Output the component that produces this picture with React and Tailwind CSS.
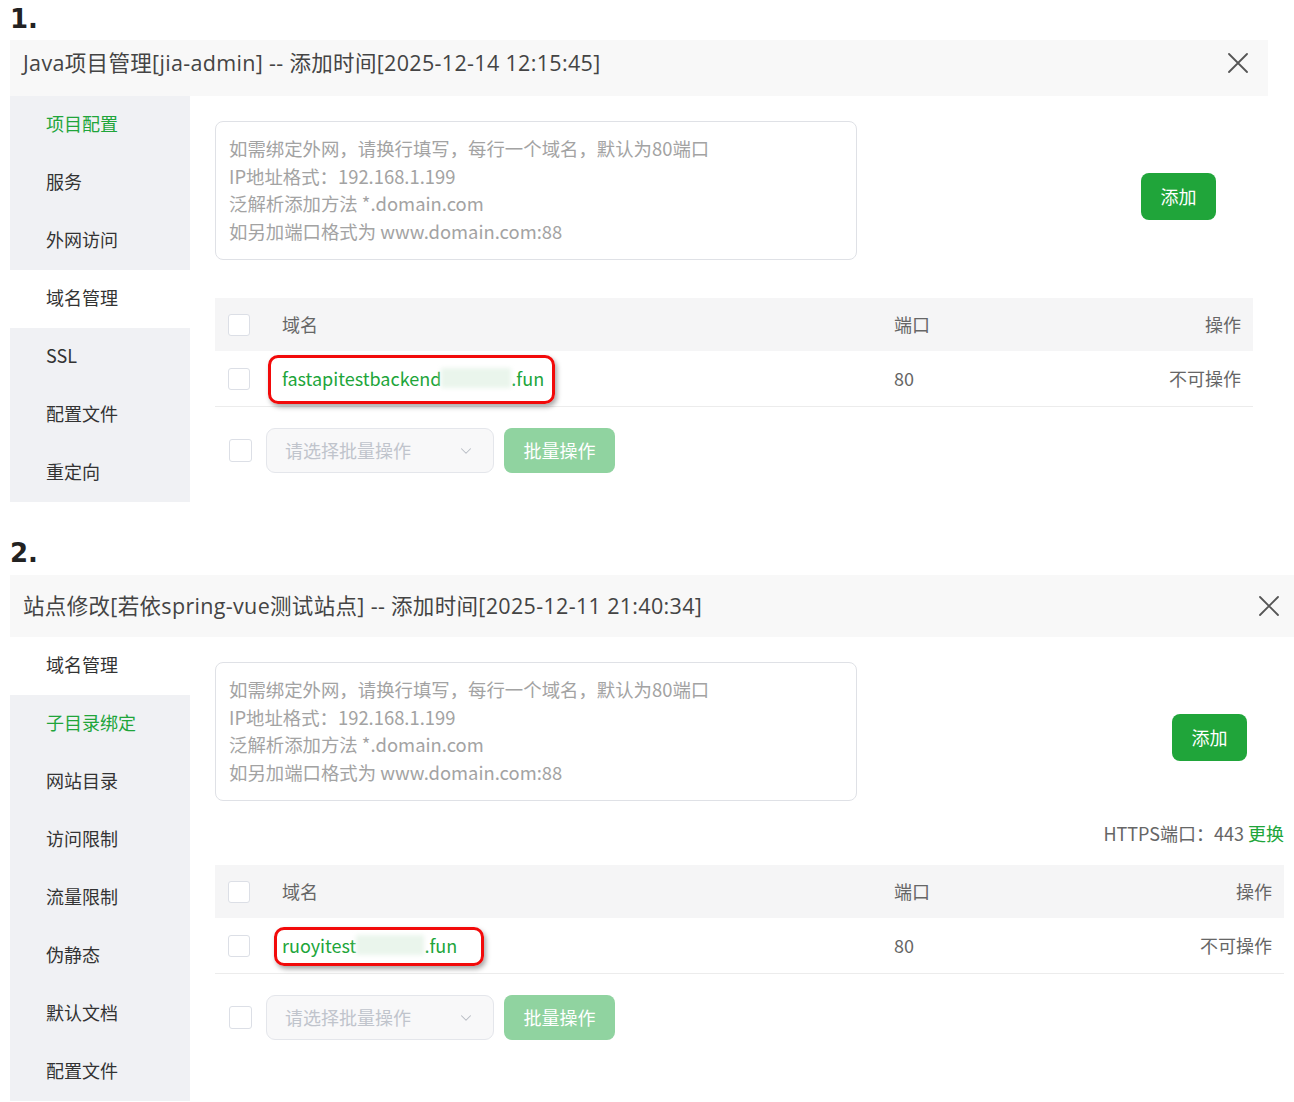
import React from 'react';
import { ChevronDown } from 'lucide-react';

const GREEN = 'text-[#20a53a]';

const CloseIcon = () => (
    <svg width="20" height="20" viewBox="0 0 20 20" fill="none">
        <path d="M1 1L19 19M19 1L1 19" stroke="#555" strokeWidth="1.8" strokeLinecap="round" />
    </svg>
);

const Checkbox = ({ className = '' }) => (
    <span className={`block w-[22px] h-[22px] bg-white border border-[#dcdfe6] rounded-[3px] ${className}`} />
);

const placeholderLines = [
    '如需绑定外网，请换行填写，每行一个域名，默认为80端口',
    'IP地址格式：192.168.1.199',
    '泛解析添加方法 *.domain.com',
    '如另加端口格式为 www.domain.com:88',
];

const DomainName = ({ prefix, blurW, box }) => (
    <span className={`relative inline-flex items-center leading-[24px] ${box.shift}`}>
        <span className={GREEN}>{prefix}</span>
        <span className={`inline-block h-[20px] ${blurW} bg-[#eaf5ec] blur-[2px]`} />
        <span className={GREEN}>.fun</span>
        <span
            className={`absolute ${box.pos} border-[3px] border-[#f20a0a] rounded-[10px] shadow-[2px_3px_5px_rgba(0,0,0,0.35)]`}
        />
    </span>
);

const Section = ({ label, labelBox, title, width, headerBox, closePr, contentPr, menu, whiteIdx, greenIdx, https, domain }) => (
    <div className={width}>
        <div className={`flex items-center ${labelBox} text-[26px] font-bold text-[#222] font-['DejaVu_Sans',sans-serif]`}>
            {label}
        </div>

        {/* 标题栏 */}
        <div className={`flex items-center justify-between bg-[#f8f8f8] pl-[13px] ${closePr} ${headerBox}`}>
            <span className="text-[21.5px] tracking-[0.33px] text-[#444] font-['Open_Sans','Noto_Sans_CJK_SC',sans-serif]">{title}</span>
            <CloseIcon />
        </div>

        <div className="flex">
            {/* 左侧菜单 */}
            <div className="w-[180px] shrink-0 bg-[#f0f1f4]">
                {menu.map((item, i) => (
                    <div
                        key={item}
                        className={`h-[58px] flex items-center pl-[36px] pb-[3px] text-[18px] ${i === whiteIdx ? 'bg-white' : ''} ${i === greenIdx ? GREEN : 'text-[#333]'}`}
                    >
                        {item}
                    </div>
                ))}
            </div>

            {/* 内容区 */}
            <div className={`flex-1 pl-[25px] ${contentPr} pt-[25px]`}>
                <div className="flex justify-between">
                    <div className="w-[642px] h-[139px] border border-[#dfe1e6] rounded-[8px] pl-[13px] pt-[13px] text-[18.4px] leading-[27.5px] text-[#a3a3a3]">
                        {placeholderLines.map(line => (
                            <div key={line}>{line}</div>
                        ))}
                    </div>
                    <button className="mt-[52px] mr-[37px] w-[75px] h-[47px] rounded-[8px] bg-[#20a53a] text-white text-[18px]">
                        添加
                    </button>
                </div>

                {https ? (
                    <div className="mt-[20px] h-[24px] leading-[24px] text-right text-[18px] text-[#666]">
                        HTTPS端口：443 <span className={GREEN}>更换</span>
                    </div>
                ) : null}

                {/* 域名表格 */}
                <div className={https ? 'mt-[20px]' : 'mt-[38px]'}>
                    <div className="flex items-center h-[53px] bg-[#f5f5f6] text-[18px] text-[#666]">
                        <div className="w-[67px] pl-[13px]"><Checkbox /></div>
                        <div className="w-[612px]">域名</div>
                        <div className="flex-1">端口</div>
                        <div className="pr-[12px]">操作</div>
                    </div>
                    <div className="flex items-center h-[56px] border-b border-[#ececec] text-[18px] text-[#666]">
                        <div className="w-[67px] pl-[13px]"><Checkbox /></div>
                        <div className="w-[612px]">
                            <DomainName {...domain} />
                        </div>
                        <div className="flex-1">80</div>
                        <div className="pr-[12px]">不可操作</div>
                    </div>
                </div>

                {/* 批量操作 */}
                <div className="flex items-center mt-[21px]">
                    <Checkbox className="ml-[14px] w-[23px] h-[23px]" />
                    <div className="ml-[14px] w-[228px] h-[45px] flex items-center justify-between pl-[18px] pr-[18px] bg-[#f8f8f9] border border-[#e4e6eb] rounded-[9px] text-[18px] text-[#c0c4cc]">
                        <span>请选择批量操作</span>
                        <ChevronDown size={18} strokeWidth={1.4} color="#b8bcc4" />
                    </div>
                    <button className="ml-[10px] w-[111px] h-[45px] rounded-[8px] bg-[#90d3a0] text-white text-[18px]">
                        批量操作
                    </button>
                </div>
            </div>
        </div>
    </div>
);

const App = () => {
    return (
        <div className="bg-white w-[1294px] min-h-[1102px] pl-[10px] font-['Noto_Sans_CJK_SC',sans-serif]">
            <Section
                label="1."
                labelBox="h-[40px] pb-[2px]"
                title="Java项目管理[jia-admin] -- 添加时间[2025-12-14 12:15:45]"
                width="w-[1258px]"
                headerBox="h-[56px] pb-[10px]"
                closePr="pr-[20px]"
                contentPr="pr-[15px]"
                menu={['项目配置', '服务', '外网访问', '域名管理', 'SSL', '配置文件', '重定向']}
                whiteIdx={3}
                greenIdx={0}
                https={false}
                domain={{
                    prefix: 'fastapitestbackend',
                    blurW: 'w-[70px]',
                    box: { shift: '-mt-[5px]', pos: '-left-[14px] -right-[11px] -top-[11px] -bottom-[14px]' },
                }}
            />
            <Section
                label="2."
                labelBox="h-[44px] mt-[29px]"
                title="站点修改[若依spring-vue测试站点] -- 添加时间[2025-12-11 21:40:34]"
                width="w-[1284px]"
                headerBox="h-[62px]"
                closePr="pr-[15px]"
                contentPr="pr-[10px]"
                menu={['域名管理', '子目录绑定', '网站目录', '访问限制', '流量限制', '伪静态', '默认文档', '配置文件']}
                whiteIdx={0}
                greenIdx={1}
                https={true}
                domain={{
                    prefix: 'ruoyitest',
                    blurW: 'w-[68px]',
                    box: { shift: '-mt-[4px]', pos: '-left-[8px] -right-[27px] -top-[6px] -bottom-[9px]' },
                }}
            />
        </div>
    );
};

export default App;
